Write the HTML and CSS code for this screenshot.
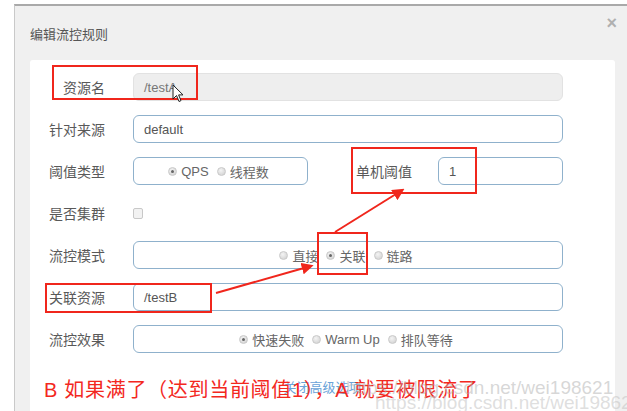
FILE: index.html
```html
<!DOCTYPE html>
<html lang="zh-CN">
<head>
    <meta charset="UTF-8">
    <meta name="viewport" content="width=device-width, initial-scale=1.0">
    <title>编辑流控规则</title>
    <link rel="stylesheet" href="styles.css">
</head>
<body>

    <div class="modal">
        <div class="modal-header">
            <span class="modal-title">编辑流控规则</span>
            <span class="close">&times;</span>
        </div>

        <div class="modal-body">
            <div class="row">
                <label class="label">资源名</label>
                <div class="field disabled">/testA</div>
            </div>

            <div class="row">
                <label class="label">针对来源</label>
                <div class="field">default</div>
            </div>

            <div class="row">
                <label class="label">阈值类型</label>
                <div class="field short radios">
                    <span class="radio checked"></span><span class="opt">QPS</span>
                    <span class="radio"></span><span class="opt">线程数</span>
                </div>
                <label class="label label-mid">单机阈值</label>
                <div class="field">1</div>
            </div>

            <div class="row">
                <label class="label">是否集群</label>
                <span class="checkbox"></span>
            </div>

            <div class="row">
                <label class="label">流控模式</label>
                <div class="field radios">
                    <span class="radio"></span><span class="opt">直接</span>
                    <span class="radio checked"></span><span class="opt">关联</span>
                    <span class="radio"></span><span class="opt">链路</span>
                </div>
            </div>

            <div class="row">
                <label class="label">关联资源</label>
                <div class="field">/testB</div>
            </div>

            <div class="row">
                <label class="label">流控效果</label>
                <div class="field radios">
                    <span class="radio checked"></span><span class="opt">快速失败</span>
                    <span class="radio"></span><span class="opt">Warm Up</span>
                    <span class="radio"></span><span class="opt">排队等待</span>
                </div>
            </div>

            <div class="advanced"><a class="link">关闭高级选项</a></div>
        </div>
    </div>

    <!-- annotations drawn over the screenshot -->
    <div class="mark mark-name"></div>
    <div class="mark mark-count"></div>
    <div class="mark mark-relate"></div>
    <div class="mark mark-ref"></div>

    <svg class="arrows" width="627" height="411" viewBox="0 0 627 411">
        <defs>
            <marker id="head" markerWidth="6" markerHeight="6" refX="1" refY="3" orient="auto">
                <path d="M0,0 L6,3 L0,6 Z" fill="#f0261c"/>
            </marker>
        </defs>
        <line x1="335" y1="232" x2="396" y2="194" stroke="#f0261c" stroke-width="2" marker-end="url(#head)"/>
        <line x1="216" y1="293" x2="304" y2="268" stroke="#f0261c" stroke-width="2" marker-end="url(#head)"/>
    </svg>

    <svg class="cursor" width="12" height="19" viewBox="0 0 12 19">
        <path d="M1,1 L1,15 L4.5,11.5 L7,17.5 L9,16.6 L6.6,10.9 L11,10.9 Z" fill="#fff" stroke="#222" stroke-width="1"/>
    </svg>

    <div class="note">B 如果满了（达到当前阈值1），A 就要被限流了</div>

    <div class="watermark wm-1">https://blog.csdn.net/wei198621</div>
    <div class="watermark wm-2">https://blog.csdn.net/wei198621</div>

</body>
</html>
```

FILE: styles.css
```css
body {
    margin: 0;
    width: 627px;
    height: 411px;
    overflow: hidden;
    position: relative;
    background-color: #fff;
    font-family: "Liberation Sans", "Noto Sans CJK SC", sans-serif;
    color: #555;
}

.modal {
    margin: 4px 0 0 14px;
    height: 407px;
    box-sizing: border-box;
    border-top: 2px solid #a9a9a9;
    border-left: 1px solid #c9c9c9;
    background-color: #f0f0f0;
    display: flex;
    flex-direction: column;
    position: relative;
}

.modal-header {
    height: 54px;
    display: flex;
    align-items: center;
    padding-left: 15px;
}

.modal-title {
    font-size: 13px;
    color: #555;
}

.close {
    position: absolute;
    top: 7px;
    right: 10px;
    font-size: 18px;
    color: #b0b0b0;
    font-weight: bold;
}

.modal-body {
    flex: 1;
    margin: 0 12px 0 15px;
    padding: 13px 52px 0 0;
    background-color: #fff;
    border-radius: 3px 3px 0 0;
}

.row {
    display: flex;
    align-items: center;
    height: 28px;
    margin-bottom: 14px;
}

.label {
    width: 75px;
    margin-right: 28px;
    text-align: right;
    font-size: 14px;
    color: #595959;
    flex-shrink: 0;
}

.label-mid {
    width: 104px;
    margin-right: 26px;
}

.field {
    flex: 1;
    height: 28px;
    box-sizing: border-box;
    border: 1px solid #8fb1cc;
    border-radius: 6px;
    padding: 0 10px;
    display: flex;
    align-items: center;
    font-size: 13px;
    color: #555;
}

.field.disabled {
    background-color: #eee;
    border-color: #e2e2e2;
    color: #777;
}

.field.short {
    flex: none;
    width: 175px;
}

.radios {
    justify-content: center;
    padding: 0 4px 0 0;
}

.radio {
    width: 9px;
    height: 9px;
    border-radius: 50%;
    background: radial-gradient(circle at 40% 35%, #f4f4f4, #cdcdcd);
    border: 1px solid #c9c9c9;
    box-sizing: border-box;
    margin: 0 4px 0 8px;
    position: relative;
}

.radio:first-child {
    margin-left: 0;
}

.radio.checked::after {
    content: "";
    position: absolute;
    left: 2px;
    top: 2px;
    width: 3px;
    height: 3px;
    border-radius: 50%;
    background-color: #666;
}

.opt {
    font-size: 13px;
    color: #666;
}

.checkbox {
    width: 10px;
    height: 11px;
    box-sizing: border-box;
    border: 1px solid #c8c8c8;
    border-radius: 2px;
    background-color: #f2f2f2;
}

.advanced {
    text-align: center;
    padding-top: 10px;
    padding-left: 52px;
}

.link {
    font-size: 13px;
    color: #6aa3d8;
}

.mark {
    position: absolute;
    box-sizing: border-box;
    border: 2px solid #f0261c;
}

.mark-name   { left: 52px;  top: 65px;  width: 146px; height: 35px; }
.mark-count  { left: 351px; top: 147px; width: 126px; height: 47px; }
.mark-relate { left: 317px; top: 232px; width: 51px;  height: 43px; }
.mark-ref    { left: 45px;  top: 283px; width: 167px; height: 30px; }

.arrows {
    position: absolute;
    left: 0;
    top: 0;
}

.cursor {
    position: absolute;
    left: 172px;
    top: 84px;
}

.note {
    position: absolute;
    left: 44px;
    top: 374px;
    font-size: 20px;
    letter-spacing: 0.7px;
    color: #f3281e;
    white-space: nowrap;
}

.watermark {
    position: absolute;
    font-size: 19px;
    white-space: nowrap;
    color: rgba(175, 175, 175, 0.5);
}

.wm-1 { left: 346px; top: 377px; }
.wm-2 { left: 375px; top: 392px; color: rgba(195, 195, 195, 0.55); }
```
